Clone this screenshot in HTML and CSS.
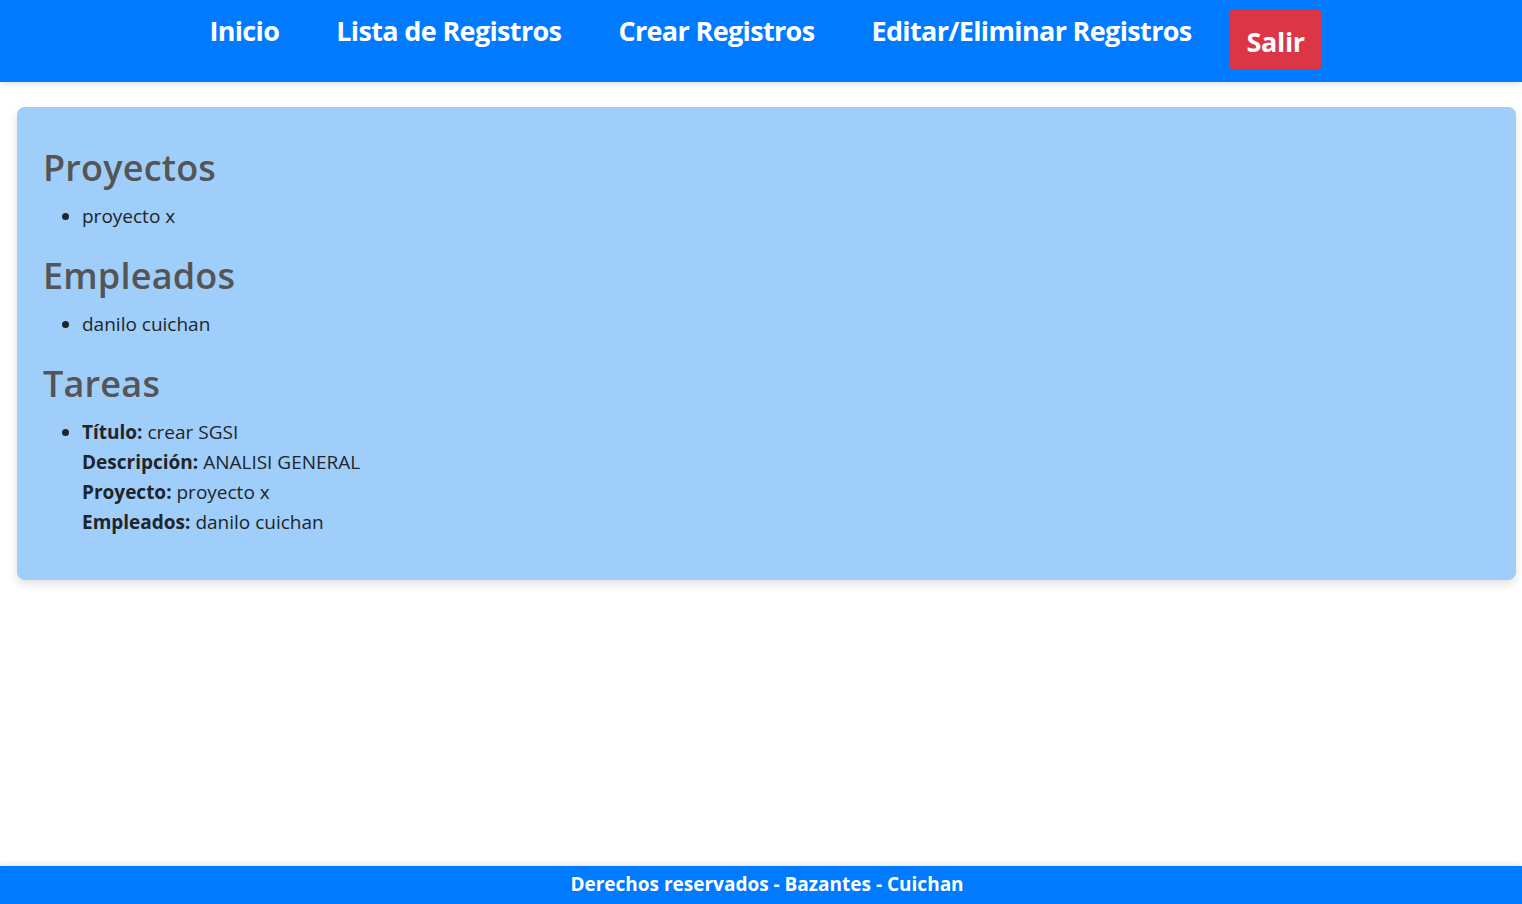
FILE: index.html
```html
<!DOCTYPE html>
<html lang="es">
<head>
<meta charset="utf-8">
<title>Registros</title>
<link rel="stylesheet" href="styles.css">
</head>
<body>
<header class="topbar">
  <nav class="nav">
    <a class="nav-link" href="#">Inicio</a>
    <a class="nav-link" href="#">Lista de Registros</a>
    <a class="nav-link" href="#">Crear Registros</a>
    <a class="nav-link" href="#">Editar/Eliminar Registros</a>
    <button class="btn-exit" type="button">Salir</button>
  </nav>
</header>
<main class="main">
  <section class="card">
    <h2 class="card-title">Proyectos</h2>
    <ul class="list">
      <li>proyecto x</li>
    </ul>
    <h2 class="card-title">Empleados</h2>
    <ul class="list">
      <li>danilo cuichan</li>
    </ul>
    <h2 class="card-title">Tareas</h2>
    <ul class="list">
      <li><strong>Título:</strong> crear SGSI<br>
        <strong>Descripción:</strong> ANALISI GENERAL<br>
        <strong>Proyecto:</strong> proyecto x<br>
        <strong>Empleados:</strong> danilo cuichan</li>
    </ul>
  </section>
</main>
<footer class="footer">Derechos reservados - Bazantes - Cuichan</footer>
</body>
</html>
```
FILE: styles.css
```css
* { box-sizing: border-box; }
html, body { height: 100%; }
body {
  margin: 0;
  font-family: "Open Sans", "Noto Sans", sans-serif;
  color: #212529;
  background: #fff;
  display: flex;
  flex-direction: column;
}
.topbar {
  background: #007bff;
  height: 82px;
  box-shadow: 0 2px 6px rgba(0,0,0,0.12);
}
.nav {
  display: flex;
  justify-content: center;
  align-items: flex-start;
  padding-right: 19px;
}
.nav-link {
  color: #fff;
  text-decoration: none;
  font-weight: 700;
  font-size: 27px;
  letter-spacing: -0.65px;
  line-height: 36px;
  padding: 13px 28.5px 0;
}
.btn-exit {
  margin: 10px 0 0 9px;
  background: #dc3545;
  color: #fff;
  border: none;
  border-radius: 4px;
  font-family: inherit;
  font-weight: 700;
  font-size: 27px;
  letter-spacing: -0.3px;
  width: 93px;
  height: 59px;
  padding: 4px 0 0;
}
.main { flex: 1; }
.card {
  margin: 25px 6px 0 17px;
  background: #9fcefa;
  border-radius: 8px;
  box-shadow: 0 4px 10px rgba(0,0,0,0.12);
  padding: 39px 26px 43px;
}
.card-title {
  margin: 0 0 11px;
  font-size: 36px;
  font-weight: 600;
  line-height: 44px;
  color: #555;
  letter-spacing: 0.2px;
}
.list {
  margin: 0 0 23px;
  padding-left: 39px;
  font-size: 19px;
  line-height: 30px;
}
.list:last-child { margin-bottom: 0; }
.list strong { font-weight: 700; }
.footer {
  background: #007bff;
  color: #fff;
  font-weight: 700;
  font-size: 19px;
  text-align: center;
  height: 38px;
  line-height: 36px;
  padding-left: 12px;
  box-shadow: 0 -2px 6px rgba(0,0,0,0.1);
}
```
